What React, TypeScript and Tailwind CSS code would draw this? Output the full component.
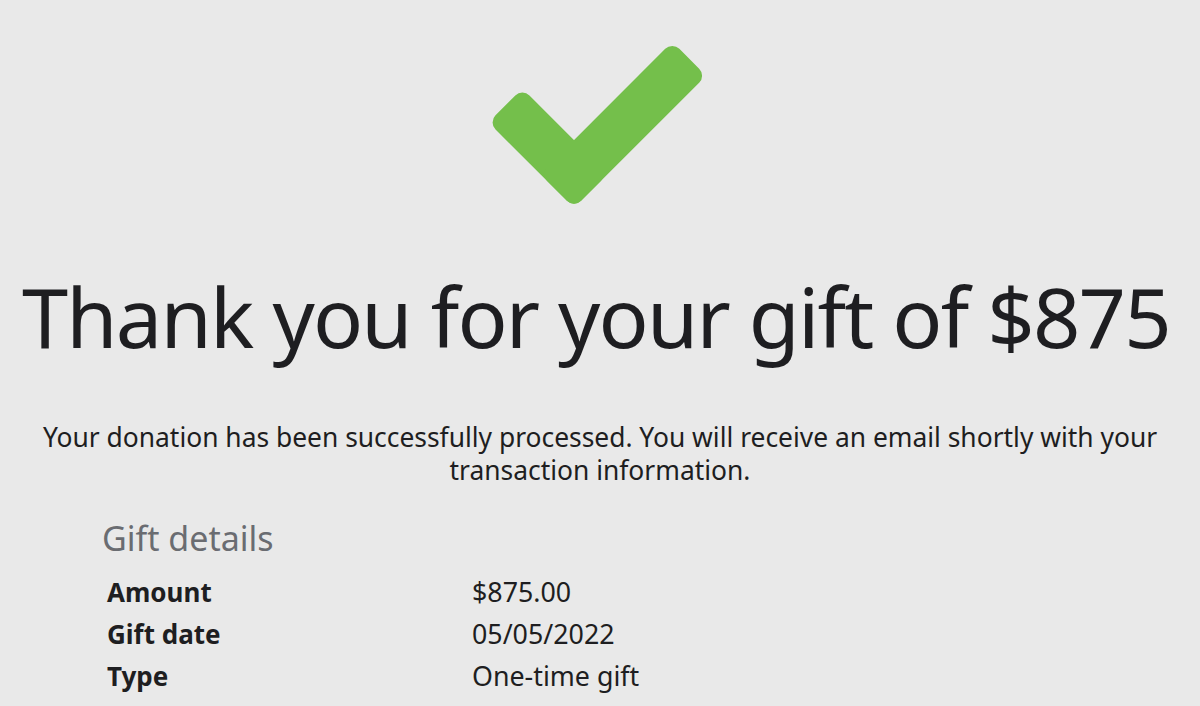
const details = [
  { label: "Amount", value: "$875.00" },
  { label: "Gift date", value: "05/05/2022" },
  { label: "Type", value: "One-time gift" },
];

function CheckMark() {
  // two rounded bars rotated 45deg, joined at the bottom
  return (
    <svg width="240" height="180" viewBox="0 0 240 180" className="block">
      <g transform="translate(86 139) rotate(45)" fill="#74bf4b">
        <rect x="-97" y="-24" width="121" height="48" rx="10" />
        <rect x="-24" y="-163" width="48" height="187" rx="10" />
      </g>
    </svg>
  );
}

export default function App() {
  return (
    <div
      className="min-h-[706px] w-full bg-[#e9e9e9] text-[#1e1e21]"
      style={{ fontFamily: '"Noto Sans", "Open Sans", sans-serif' }}
    >
      <div className="flex flex-col items-center pt-[35px]">
        <div className="ml-[16px]">
          <CheckMark />
        </div>
        <h1 className="mt-[51px] mr-[8px] whitespace-nowrap text-[83px] leading-[100px] font-normal tracking-[-1.8px]">
          Thank you for your gift of $875
        </h1>
        <p className="mt-[55px] text-center text-[26.4px] leading-[33px]">
          Your donation has been successfully processed. You will receive an email shortly with your
          <br />
          transaction information.
        </p>
      </div>

      <div className="pl-[102px] pt-[31px]">
        <h2 className="text-[34px] leading-[40px] text-[#6a6c71]">Gift details</h2>
        <div className="mt-[17px] pl-[5px] grid grid-cols-[365px_1fr] gap-y-[8px] leading-[34px]">
          {details.map((d) => (
            <div key={d.label} className="contents">
              <div className="text-[26px] font-bold">{d.label}</div>
              <div className="text-[26.8px]">{d.value}</div>
            </div>
          ))}
        </div>
      </div>
    </div>
  );
}
